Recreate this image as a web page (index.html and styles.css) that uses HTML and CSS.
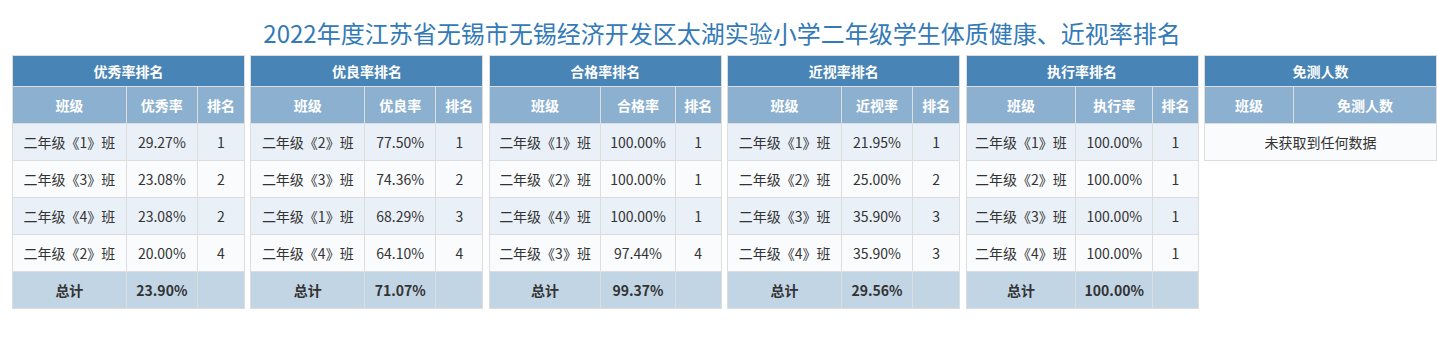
FILE: index.html
```html
<!DOCTYPE html>
<html lang="zh-CN">
<head>
<meta charset="utf-8">
<title>体质健康、近视率排名</title>
<link rel="stylesheet" href="styles.css">
</head>
<body>
<div class="page">
  <h1 class="title">2022年度江苏省无锡市无锡经济开发区太湖实验小学二年级学生体质健康、近视率排名</h1>
  <div class="boards">
    <table class="rank">
      <thead>
        <tr><th class="cap" colspan="3">优秀率排名</th></tr>
        <tr class="sub"><th>班级</th><th>优秀率</th><th>排名</th></tr>
      </thead>
      <tbody>
        <tr class="odd"><td>二年级《1》班</td><td>29.27%</td><td>1</td></tr>
        <tr class="even"><td>二年级《3》班</td><td>23.08%</td><td>2</td></tr>
        <tr class="odd"><td>二年级《4》班</td><td>23.08%</td><td>2</td></tr>
        <tr class="even"><td>二年级《2》班</td><td>20.00%</td><td>4</td></tr>
        <tr class="total"><td>总计</td><td>23.90%</td><td></td></tr>
      </tbody>
    </table>
    <table class="rank">
      <thead>
        <tr><th class="cap" colspan="3">优良率排名</th></tr>
        <tr class="sub"><th>班级</th><th>优良率</th><th>排名</th></tr>
      </thead>
      <tbody>
        <tr class="odd"><td>二年级《2》班</td><td>77.50%</td><td>1</td></tr>
        <tr class="even"><td>二年级《3》班</td><td>74.36%</td><td>2</td></tr>
        <tr class="odd"><td>二年级《1》班</td><td>68.29%</td><td>3</td></tr>
        <tr class="even"><td>二年级《4》班</td><td>64.10%</td><td>4</td></tr>
        <tr class="total"><td>总计</td><td>71.07%</td><td></td></tr>
      </tbody>
    </table>
    <table class="rank">
      <thead>
        <tr><th class="cap" colspan="3">合格率排名</th></tr>
        <tr class="sub"><th>班级</th><th>合格率</th><th>排名</th></tr>
      </thead>
      <tbody>
        <tr class="odd"><td>二年级《1》班</td><td>100.00%</td><td>1</td></tr>
        <tr class="even"><td>二年级《2》班</td><td>100.00%</td><td>1</td></tr>
        <tr class="odd"><td>二年级《4》班</td><td>100.00%</td><td>1</td></tr>
        <tr class="even"><td>二年级《3》班</td><td>97.44%</td><td>4</td></tr>
        <tr class="total"><td>总计</td><td>99.37%</td><td></td></tr>
      </tbody>
    </table>
    <table class="rank">
      <thead>
        <tr><th class="cap" colspan="3">近视率排名</th></tr>
        <tr class="sub"><th>班级</th><th>近视率</th><th>排名</th></tr>
      </thead>
      <tbody>
        <tr class="odd"><td>二年级《1》班</td><td>21.95%</td><td>1</td></tr>
        <tr class="even"><td>二年级《2》班</td><td>25.00%</td><td>2</td></tr>
        <tr class="odd"><td>二年级《3》班</td><td>35.90%</td><td>3</td></tr>
        <tr class="even"><td>二年级《4》班</td><td>35.90%</td><td>3</td></tr>
        <tr class="total"><td>总计</td><td>29.56%</td><td></td></tr>
      </tbody>
    </table>
    <table class="rank">
      <thead>
        <tr><th class="cap" colspan="3">执行率排名</th></tr>
        <tr class="sub"><th>班级</th><th>执行率</th><th>排名</th></tr>
      </thead>
      <tbody>
        <tr class="odd"><td>二年级《1》班</td><td>100.00%</td><td>1</td></tr>
        <tr class="even"><td>二年级《2》班</td><td>100.00%</td><td>1</td></tr>
        <tr class="odd"><td>二年级《3》班</td><td>100.00%</td><td>1</td></tr>
        <tr class="even"><td>二年级《4》班</td><td>100.00%</td><td>1</td></tr>
        <tr class="total"><td>总计</td><td>100.00%</td><td></td></tr>
      </tbody>
    </table>
    <table class="rank rank-empty">
      <thead>
        <tr><th class="cap" colspan="2">免测人数</th></tr>
        <tr class="sub"><th class="c-class">班级</th><th>免测人数</th></tr>
      </thead>
      <tbody>
        <tr class="even"><td colspan="2">未获取到任何数据</td></tr>
      </tbody>
    </table>
  </div>
</div>
</body>
</html>
```
FILE: styles.css
```css
html, body {
  margin: 0;
  padding: 0;
  background: #ffffff;
}
body {
  font-family: "Microsoft YaHei", "Noto Sans CJK SC", "Noto Sans", sans-serif;
  color: #333333;
  font-size: 14px;
}
.page {
  padding: 0 0 0 12px;
}
.title {
  margin: 0;
  padding: 16px 5px 5px 0;
  font-size: 24px;
  line-height: 34px;
  font-weight: normal;
  color: #337ab7;
  text-align: center;
}
.boards {
  display: grid;
  grid-template-columns: repeat(6, 1fr);
  column-gap: 5.4px;
  align-items: start;
}
.rank {
  width: 100%;
  border-collapse: collapse;
  border: 1px solid #dddddd;
}
.rank th,
.rank td {
  border: 1px solid #dddddd;
  text-align: center;
  line-height: 20px;
  white-space: nowrap;
}
.rank th {
  color: #ffffff;
  font-weight: bold;
  padding: 8px 8px;
}
.rank th.cap {
  background: #4884b6;
  padding: 5px 8px;
}
.rank .sub th {
  background: #8cb0cf;
}
.rank td {
  padding: 8px 8px;
  color: #333333;
}
.rank .odd td {
  background: #e9f0f7;
}
.rank .even td {
  background: #f9fbfd;
}
.rank .total td {
  background: #c2d5e5;
  font-weight: bold;
}
.rank-empty .c-class {
  width: 72px;
}
```
